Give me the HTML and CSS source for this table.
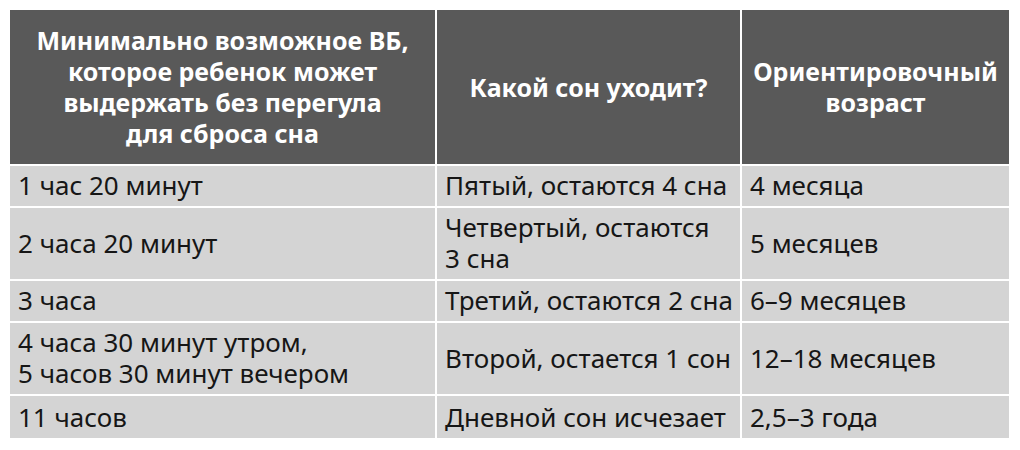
FILE: index.html
```html
<!DOCTYPE html>
<html lang="ru">
<head>
<meta charset="utf-8">
<title>Таблица</title>
<link rel="stylesheet" href="styles.css">
</head>
<body>
<table class="sleep">
  <colgroup>
    <col class="c1"><col class="c2"><col class="c3">
  </colgroup>
  <thead>
    <tr>
      <th>Минимально возможное ВБ,<br>которое ребенок может<br>выдержать без перегула<br>для сброса сна</th>
      <th>Какой сон уходит?</th>
      <th>Ориентировочный<br>возраст</th>
    </tr>
  </thead>
  <tbody>
    <tr class="r1"><td>1 час 20 минут</td><td>Пятый, остаются 4 сна</td><td>4 месяца</td></tr>
    <tr class="r2"><td>2 часа 20 минут</td><td>Четвертый, остаются<br>3 сна</td><td>5 месяцев</td></tr>
    <tr class="r3"><td>3 часа</td><td>Третий, остаются 2 сна</td><td>6–9 месяцев</td></tr>
    <tr class="r4"><td>4 часа 30 минут утром,<br>5 часов 30 минут вечером</td><td>Второй, остается 1 сон</td><td>12–18 месяцев</td></tr>
    <tr class="r5"><td>11 часов</td><td>Дневной сон исчезает</td><td>2,5–3 года</td></tr>
  </tbody>
</table>
</body>
</html>
```

FILE: styles.css
```css
html, body {
  background: #ffffff;
}
body {
  margin: 8px;
  font-family: "Noto Sans", "Open Sans", sans-serif;
}
.sleep {
  border-collapse: separate;
  border-spacing: 2px;
  width: 1003px;
  table-layout: fixed;
}
.c1 { width: 425px; }
.c2 { width: 303px; }
.c3 { width: 267px; }
.sleep th {
  background: #595959;
  color: #ffffff;
  font-weight: 700;
  font-size: 25px;
  line-height: 31px;
  text-align: center;
  vertical-align: middle;
  padding: 15px 6px;
  height: 124px;
}
.sleep td {
  background: #d4d4d4;
  color: #161616;
  font-size: 26px;
  line-height: 31px;
  text-align: left;
  vertical-align: middle;
  padding: 4px 8px 5px;
  white-space: nowrap;
}
.sleep .r5 td {
  padding-top: 6px;
  padding-bottom: 5px;
}
```
